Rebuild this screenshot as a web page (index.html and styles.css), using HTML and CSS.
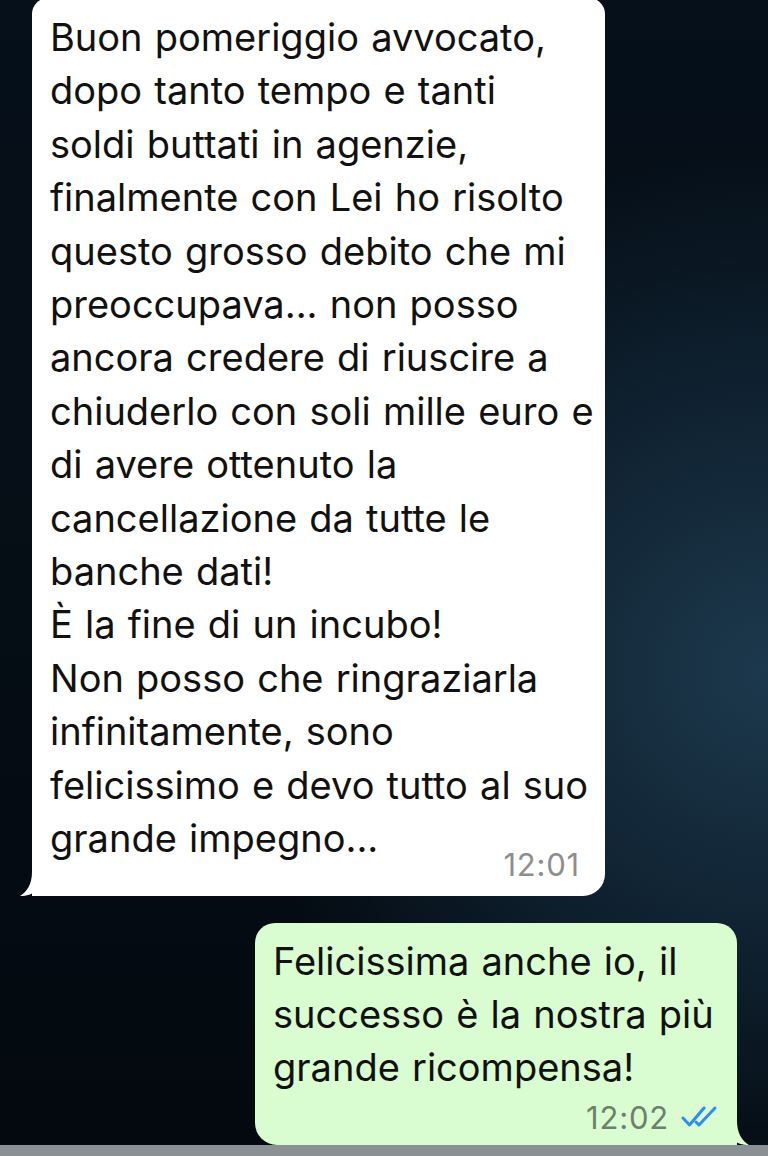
FILE: index.html
```html
<!DOCTYPE html>
<html lang="it">
<head>
  <meta charset="UTF-8">
  <meta name="viewport" content="width=device-width, initial-scale=1.0">
  <title>Chat</title>
  <link rel="stylesheet" href="styles.css">
</head>
<body>
  <div class="chat">
    <div class="bubble in">
      <div class="text">Buon pomeriggio avvocato,<br>dopo tanto tempo e tanti<br>soldi buttati in agenzie,<br>finalmente con Lei ho risolto<br>questo grosso debito che mi<br>preoccupava... non posso<br>ancora credere di riuscire a<br>chiuderlo con soli mille euro e<br>di avere ottenuto la<br>cancellazione da tutte le<br>banche dati!<br>È la fine di un incubo!<br>Non posso che ringraziarla<br>infinitamente, sono<br>felicissimo e devo tutto al suo<br>grande impegno...</div>
      <div class="meta meta-in"><span class="time">12:01</span></div>
      <svg class="tail tail-in" viewBox="0 0 30 34" width="30" height="34">
        <path d="M13 0 L13 10 C13 22 8 30 1 34 C8 34 13 32 17 29 C20 32 25 34 30 34 L30 0 Z" fill="#ffffff"/>
      </svg>
    </div>

    <div class="bubble out">
      <div class="text">Felicissima anche io, il<br>successo è la nostra più<br>grande ricompensa!</div>
      <div class="meta">
        <span class="time">12:02</span>
        <svg class="ticks" viewBox="0 0 38 24" width="38" height="24">
          <path d="M2 13 L8.5 20 L23 3" fill="none" stroke="#2f8df2" stroke-width="3" stroke-linecap="round" stroke-linejoin="round"/>
          <path d="M15 17 L18 20 L34 3" fill="none" stroke="#2f8df2" stroke-width="3" stroke-linecap="round" stroke-linejoin="round"/>
        </svg>
      </div>
      <svg class="tail tail-out" viewBox="0 0 30 34" width="30" height="34">
        <path d="M17 0 L17 10 C17 22 22 30 29 34 C22 34 17 32 13 29 C10 32 5 34 0 34 L0 0 Z" fill="#d9fcd0"/>
      </svg>
    </div>
  </div>
  <div class="bottom-bar"></div>
</body>
</html>
```

FILE: styles.css
```css
html, body {
  margin: 0;
  height: 1156px;
  overflow: hidden;
}
body {
  font-family: 'Inter', 'Liberation Sans', sans-serif;
  color: #111;
  display: flex;
  flex-direction: column;
  background-color: #040a10;
  background-image:
    radial-gradient(ellipse 70% 45% at 100% 58%, #1d394d 0%, #112535 45%, rgba(6,14,21,0) 100%),
    linear-gradient(180deg, #06101a 0%, #050d15 50%, #03090f 100%);
}
.chat {
  flex: 1;
  display: flex;
  flex-direction: column;
  gap: 27px;
}
.bubble {
  position: relative;
  box-sizing: border-box;
  border-radius: 18px;
}
.bubble .text {
  font-size: 38px;
  line-height: 53.4px;
  word-spacing: 1.5px;
  white-space: nowrap;
}
.in {
  background: #ffffff;
  margin-left: 32px;
  width: 573px;
  padding: 13px 25px 13px 18px;
  border-radius: 16px 16px 22px 0;
  margin-top: -2px;
}
.out {
  background: #d9fcd0;
  align-self: flex-end;
  margin-right: 31px;
  width: 482px;
  padding: 12px 22px 9px 18px;
  border-radius: 20px 20px 0 22px;
}
.meta {
  display: flex;
  justify-content: flex-end;
  align-items: center;
  gap: 12px;
}
.meta-in {
  margin-top: -20px;
}
.time {
  font-size: 31px;
  letter-spacing: 0.8px;
  color: #8e8e8e;
}
.out .time {
  color: #6e806d;
}
.out .meta {
  margin-top: 4px;
  margin-right: -4px;
}
.tail {
  position: absolute;
  bottom: 0;
}
.tail-in {
  left: -13px;
}
.tail-out {
  right: -13px;
}
.bottom-bar {
  height: 13px;
  background: #8b9095;
}
```
